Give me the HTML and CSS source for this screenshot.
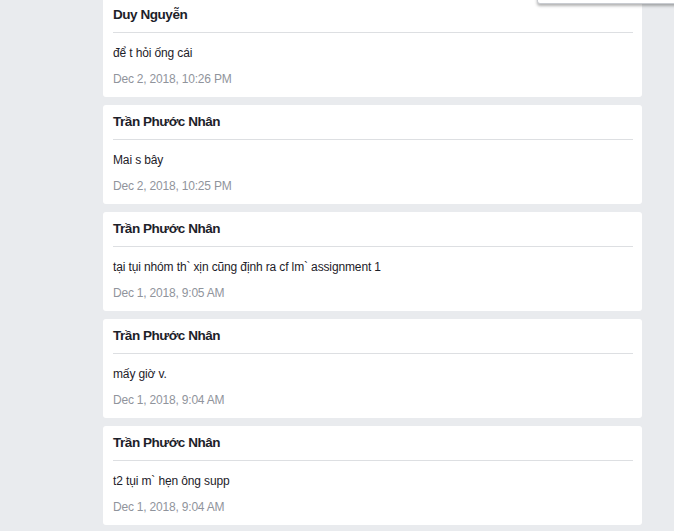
FILE: index.html
```html
<!DOCTYPE html>
<html lang="vi">
<head>
<meta charset="utf-8">
<link rel="stylesheet" href="styles.css">
</head>
<body>
<div class="menu-edge"></div>
<main class="feed">
  <article class="card">
    <h3 class="name">Duy Nguyễn</h3>
    <p class="msg">để t hỏi ống cái</p>
    <p class="date">Dec 2, 2018, 10:26 PM</p>
  </article>
  <article class="card">
    <h3 class="name">Trần Phước Nhân</h3>
    <p class="msg">Mai s bây</p>
    <p class="date">Dec 2, 2018, 10:25 PM</p>
  </article>
  <article class="card">
    <h3 class="name">Trần Phước Nhân</h3>
    <p class="msg">tại tụi nhóm th` xịn cũng định ra cf lm` assignment 1</p>
    <p class="date">Dec 1, 2018, 9:05 AM</p>
  </article>
  <article class="card">
    <h3 class="name">Trần Phước Nhân</h3>
    <p class="msg">mấy giờ v.</p>
    <p class="date">Dec 1, 2018, 9:04 AM</p>
  </article>
  <article class="card">
    <h3 class="name">Trần Phước Nhân</h3>
    <p class="msg">t2 tụi m` hẹn ông supp</p>
    <p class="date">Dec 1, 2018, 9:04 AM</p>
  </article>
</main>
</body>
</html>
```
FILE: styles.css
```css
html, body {
  margin: 0;
  padding: 0;
  background: #e9ebee;
  overflow: hidden;
  height: 531px;
}
body {
  font-family: "Liberation Sans", Arial, sans-serif;
  color: #1d2129;
  position: relative;
}
.feed {
  width: 539px;
  margin: -2px 0 0 103px;
  display: flex;
  flex-direction: column;
  gap: 8px;
}
.card {
  background: #fff;
  border-radius: 3px;
  padding: 8px 9px 9px 10px;
  height: 99px;
  box-sizing: border-box;
}
.name {
  margin: 0;
  font-size: 13.5px;
  letter-spacing: -0.45px;
  line-height: 18px;
  font-weight: bold;
  padding-bottom: 8px;
  border-bottom: 1px solid #dddfe2;
}
.msg {
  margin: 11px 0 0;
  font-size: 12px;
  letter-spacing: -0.13px;
  line-height: 18px;
}
.date {
  margin: 8px 0 0;
  font-size: 12px;
  letter-spacing: -0.2px;
  line-height: 18px;
  color: #90949c;
}
.menu-edge {
  position: absolute;
  left: 537px;
  top: -20px;
  width: 160px;
  height: 22px;
  background: #fff;
  border: 1px solid #c9ccd1;
  border-radius: 0 0 3px 3px;
  box-shadow: 0 2px 3px rgba(0,0,0,0.3);
  z-index: 2;
}
```
